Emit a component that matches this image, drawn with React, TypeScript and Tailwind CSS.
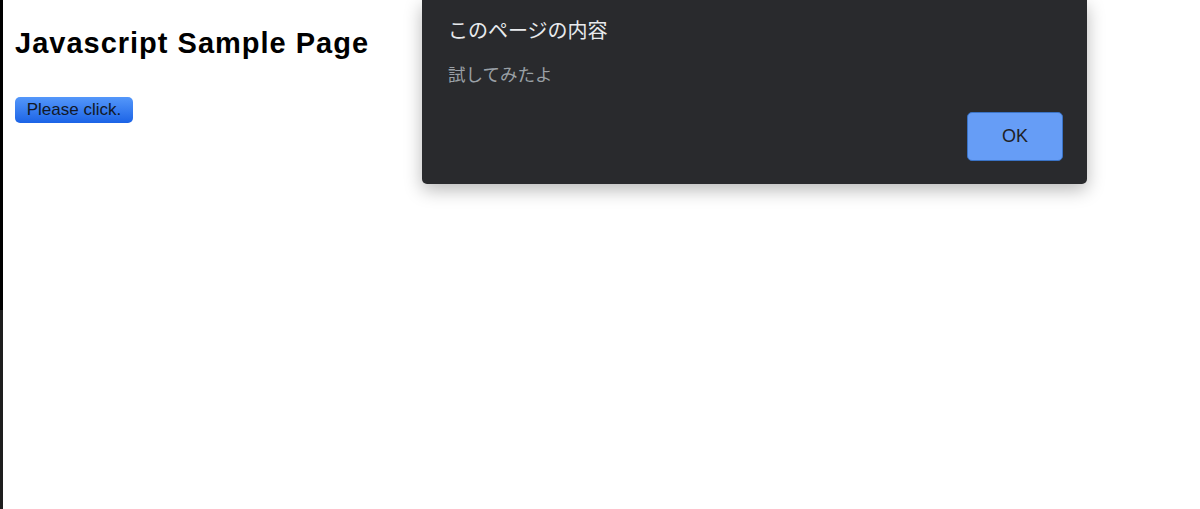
import React from "react";

export default function App() {
  return (
    <div className="relative flex h-[509px] w-[1200px] overflow-hidden bg-white">
      {/* window edge on the left */}
      <div className="flex w-[3px] shrink-0 flex-col">
        <div className="h-[310px] bg-black" />
        <div className="flex-1 bg-[#1e1e1e]" />
      </div>

      {/* PAGE */}
      <main className="flex-1 pl-[12px] pt-[26px]">
        <h1 className="text-[29px] font-bold leading-[34px] tracking-[1px] text-black [font-family:'Liberation_Sans',sans-serif]">
          Javascript Sample Page
        </h1>
        <button className="mt-[37px] flex h-[26px] w-[118px] items-center justify-center rounded-[5px] bg-gradient-to-b from-[#5497fa] to-[#1b63e6] text-[17px] text-[#111827] [font-family:'Liberation_Sans',sans-serif]">
          Please click.
        </button>
      </main>

      {/* ALERT DIALOG */}
      <div className="absolute left-[422px] top-0 flex h-[184px] w-[665px] flex-col rounded-b-[5px] bg-[#292a2d] px-[26px] shadow-[0_6px_18px_rgba(0,0,0,0.28)] [font-family:'Noto_Sans_CJK_JP',sans-serif]">
        <div className="pt-[16px] text-[20px] leading-[28px] text-[#e8eaed]">
          このページの内容
        </div>
        <div className="mt-[17px] text-[17.5px] leading-[26px] text-[#9aa0a6]">
          試してみたよ
        </div>
        <div className="mt-auto flex justify-end pb-[23px]">
          <button className="-mr-[2px] flex h-[49px] w-[96px] items-center justify-center rounded-[5px] border border-[#3a73c6] bg-[#669df6] text-[18px] text-[#202124] [font-family:'Liberation_Sans',sans-serif]">
            OK
          </button>
        </div>
      </div>
    </div>
  );
}
